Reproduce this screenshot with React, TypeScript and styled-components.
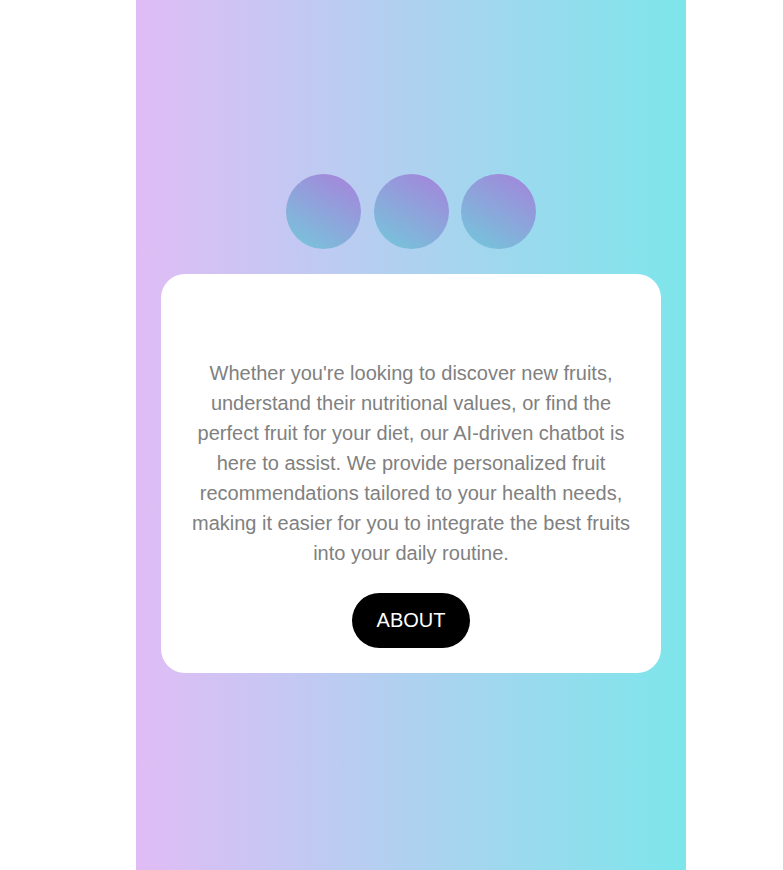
import React from "react";
import styled, { createGlobalStyle } from "styled-components";

const Global = createGlobalStyle`
  html, body { margin: 0; padding: 0; background: #ffffff; }
  body { font-family: "Liberation Sans", Arial, sans-serif; }
`;

const Panel = styled.main`
  box-sizing: border-box;
  width: 550px;
  min-height: 870px;
  margin-left: 136px;
  padding-top: 174px;
  background: linear-gradient(90deg, #e0bcf5 0%, #7de6eb 100%);
  display: flex;
  flex-direction: column;
  align-items: center;
`;

const Dots = styled.div`
  display: flex;
  gap: 12.5px;
  margin-bottom: 25px;
`;

const Dot = styled.div`
  width: 75px;
  height: 75px;
  border-radius: 50%;
  background: linear-gradient(210deg, #a678d9 0%, #6cc8d8 100%);
  opacity: 0.9;
`;

const Card = styled.section`
  box-sizing: border-box;
  width: 500px;
  background: #ffffff;
  border-radius: 24px;
  padding: 84px 30px 25px;
  display: flex;
  flex-direction: column;
  align-items: center;
`;

const Text = styled.p`
  margin: 0 0 25px;
  font-size: 20px;
  line-height: 30px;
  color: #808080;
  text-align: center;
`;

const Button = styled.button`
  border: none;
  background: #000000;
  color: #ffffff;
  font-family: "Liberation Sans", Arial, sans-serif;
  font-size: 20px;
  height: 55px;
  width: 118px;
  border-radius: 28px;
  cursor: pointer;
`;

export default function App() {
  return (
    <>
      <Global />
      <Panel>
        <Dots>
          <Dot />
          <Dot />
          <Dot />
        </Dots>
        <Card>
          <Text>
            Whether you're looking to discover new fruits, understand their nutritional values, or find the perfect fruit for your diet, our AI-driven chatbot is here to assist. We provide personalized fruit recommendations tailored to your health needs, making it easier for you to integrate the best fruits into your daily routine.
          </Text>
          <Button>ABOUT</Button>
        </Card>
      </Panel>
    </>
  );
}
